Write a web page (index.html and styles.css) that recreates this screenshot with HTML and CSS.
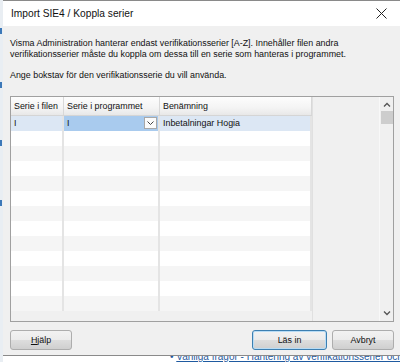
FILE: index.html
```html
<!DOCTYPE html>
<html>
<head>
<meta charset="utf-8">
<link rel="stylesheet" href="styles.css">
</head>
<body>
<div class="screen">
  <div class="behind">
    <span class="mk m1"></span><span class="mk m2"></span><span class="mk m3"></span><span class="mk m4"></span>
  </div>
  <div class="dialog">
    <div class="titlebar">
      <span class="title">Import SIE4 / Koppla serier</span>
      <svg class="close" width="11" height="11" viewBox="0 0 11 11"><path d="M0.5 0.5L10.5 10.5M10.5 0.5L0.5 10.5" stroke="#222" stroke-width="1" fill="none"/></svg>
    </div>
    <div class="body">
      <p class="info">Visma Administration hanterar endast verifikationsserier [A-Z]. Innehåller filen andra<br>verifikationsserier måste du koppla om dessa till en serie som hanteras i programmet.</p>
      <p class="info second">Ange bokstav för den verifikationsserie du vill använda.</p>
      <div class="grid">
        <div class="table">
          <div class="row head">
            <div class="c c1">Serie i filen</div>
            <div class="c c2">Serie i programmet</div>
            <div class="c c3">Benämning</div>
          </div>
          <div class="row sel">
            <div class="c c1">I</div>
            <div class="c c2 edit">I<span class="dd"><svg width="7" height="4" viewBox="0 0 7 4"><path d="M0.5 0.5L3.5 3.5L6.5 0.5" stroke="#444" fill="none"/></svg></span></div>
            <div class="c c3">Inbetalningar Hogia</div>
          </div>
          <div class="row"><div class="c c1"></div><div class="c c2"></div><div class="c c3"></div></div>
          <div class="row alt"><div class="c c1"></div><div class="c c2"></div><div class="c c3"></div></div>
          <div class="row"><div class="c c1"></div><div class="c c2"></div><div class="c c3"></div></div>
          <div class="row alt"><div class="c c1"></div><div class="c c2"></div><div class="c c3"></div></div>
          <div class="row"><div class="c c1"></div><div class="c c2"></div><div class="c c3"></div></div>
          <div class="row alt"><div class="c c1"></div><div class="c c2"></div><div class="c c3"></div></div>
          <div class="row"><div class="c c1"></div><div class="c c2"></div><div class="c c3"></div></div>
          <div class="row alt"><div class="c c1"></div><div class="c c2"></div><div class="c c3"></div></div>
          <div class="row"><div class="c c1"></div><div class="c c2"></div><div class="c c3"></div></div>
          <div class="row alt"><div class="c c1"></div><div class="c c2"></div><div class="c c3"></div></div>
          <div class="row"><div class="c c1"></div><div class="c c2"></div><div class="c c3"></div></div>
          <div class="row alt last"><div class="c c1"></div><div class="c c2"></div><div class="c c3"></div></div>
        </div>
        <div class="empty"></div>
        <div class="scroll">
          <svg class="arr up" width="8" height="5" viewBox="0 0 8 5"><path d="M1 4.5L4 1.5L7 4.5" stroke="#555" stroke-width="1.3" fill="none"/></svg>
          <div class="thumb"></div>
          <div class="track"></div>
          <svg class="arr down" width="8" height="5" viewBox="0 0 8 5"><path d="M1 0.5L4 3.5L7 0.5" stroke="#555" stroke-width="1.3" fill="none"/></svg>
        </div>
      </div>
      <div class="buttons">
        <button class="btn help"><u>H</u>jälp</button>
        <span class="spacer"></span>
        <button class="btn ok">Läs in</button>
        <button class="btn cancel">Avbryt</button>
      </div>
    </div>
  </div>
  <div class="below">
    <span class="link">• <u>Vanliga frågor - Hantering av verifikationsserier och SIE-import</u></span>
  </div>
</div>
</body>
</html>
```
FILE: styles.css
```css
* { box-sizing: border-box; }
html, body { margin: 0; padding: 0; }
body { width: 400px; height: 362px; overflow: hidden; background: #fff; font-family: "Liberation Sans", Arial, sans-serif; }
.screen { position: relative; width: 400px; height: 362px; display: flex; flex-direction: column; }
.behind { position: absolute; left: 0; top: 0; width: 3px; height: 362px; background: #e9eef3; }
.mk { position: absolute; left: 0; width: 2px; height: 6px; background: #3c78b8; }
.m1 { top: 28px; } .m2 { top: 82px; } .m3 { top: 140px; } .m4 { top: 200px; }
.dialog { margin-left: 2px; width: 398px; height: 356px; flex-shrink: 0; border: 1px solid #8a8a8a; border-right: none; display: flex; flex-direction: column; background: #f0f0f0; }
.titlebar { height: 25px; background: #fff; display: flex; align-items: center; padding-left: 8px; padding-right: 13px; flex-shrink: 0; }
.title { flex: 1; font-family: "Liberation Sans", Arial, sans-serif; font-size: 10.2px; color: #111; }
.close { display: block; }
.body { flex: 1; display: flex; flex-direction: column; padding: 12px 6px 0 7px; }
.info { margin: 0; font-size: 8.9px; line-height: 11px; color: #111; white-space: nowrap; }
.second { margin-top: 10px; }
.grid { margin-top: 15px; height: 226px; flex-shrink: 0; border: 1px solid #a0a0a0; background: #f0f0f0; display: flex; }
.table { width: 301px; display: flex; flex-direction: column; }
.row { display: flex; height: 15px; flex-shrink: 0; background: #fff; }
.row.alt { background: #f5f5f5; }
.row.head { height: 19px; background: linear-gradient(#fdfdfd, #f4f4f4 60%, #e8e8e8); border-bottom: 1px solid #d5d5d5; }
.row.sel { background: #dce7f4; }
.c { font-size: 8.9px; line-height: 15px; color: #111; padding-left: 3px; border-right: 2px solid #e4e4e4; height: 100%; white-space: nowrap; overflow: hidden; }
.head .c { line-height: 18px; border-right: 1px solid #d8d8d8; }
.c1 { width: 53px; }
.c2 { width: 96px; }
.c3 { width: 152px; }
.sel .c2.edit { background: #a9cbee; position: relative; }
.dd { position: absolute; right: 1px; top: 1px; width: 13px; height: 12px; background: #fbfbfb; border: 1px solid #a8a8a8; display: flex; align-items: center; justify-content: center; }
.dd svg { display: block; }
.empty { flex: 1; border-left: 1px solid #e0e0e0; }
.scroll { width: 14px; display: flex; flex-direction: column; align-items: center; background: #f0f0f0; border-left: 1px solid #f8f8f8; }
.arr { display: block; }
.arr.up { margin: 5px 0 4px; }
.arr.down { margin: 4px 0 5px; }
.thumb { width: 12px; height: 13px; background: #cdcdcd; }
.track { flex: 1; }
.buttons { display: flex; margin-top: 8px; gap: 5px; }
.spacer { flex: 1; }
.btn { height: 20px; border: 1px solid #adadad; border-radius: 3px; background: linear-gradient(#f2f2f2, #ebebeb 50%, #dddddd 51%, #cfcfcf); font-family: "Liberation Sans", Arial, sans-serif; font-size: 8.9px; color: #111; padding: 0; }
.btn.help { width: 62px; }
.btn.ok { width: 75px; border-color: #3c7fb1; box-shadow: inset 0 0 0 1px #b8dcf5; }
.btn.cancel { width: 62px; }
.below { height: 6px; padding-left: 170px; overflow: hidden; }
.link { display: block; font-size: 10px; line-height: 10px; margin-top: -4px; color: #1f5aa0; white-space: nowrap; }
```
